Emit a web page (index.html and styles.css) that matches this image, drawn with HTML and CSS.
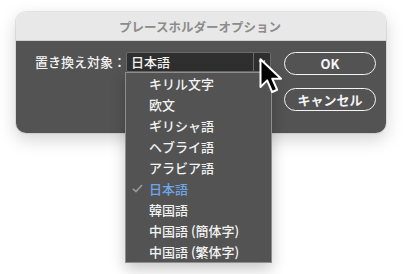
FILE: index.html
```html
<!DOCTYPE html>
<html lang="ja">
<head>
<meta charset="utf-8">
<link rel="stylesheet" href="styles.css">
</head>
<body>
<div class="stage">
  <div class="dialog">
    <div class="titlebar">プレースホルダーオプション</div>
    <div class="content">
      <div class="row">
        <span class="label">置き換え対象：</span>
        <div class="select">
          <span class="value">日本語</span>
          <span class="arrowbox">
            <svg width="8" height="6" viewBox="0 0 8 6"><path d="M1 1.5 L4 4.5 L7 1.5" fill="none" stroke="#cfcfcf" stroke-width="1.3"/></svg>
          </span>
        </div>
      </div>
      <div class="buttons">
        <button class="btn">OK</button>
        <button class="btn">キャンセル</button>
      </div>
    </div>
  </div>
  <ul class="menu">
    <li>キリル文字</li>
    <li>欧文</li>
    <li>ギリシャ語</li>
    <li>ヘブライ語</li>
    <li>アラビア語</li>
    <li class="checked"><svg class="check" width="11" height="9" viewBox="0 0 11 9"><path d="M1 4.8 L4 7.6 L10 1" fill="none" stroke="#9a9a9a" stroke-width="1.6"/></svg>日本語</li>
    <li>韓国語</li>
    <li>中国語 (簡体字)</li>
    <li>中国語 (繁体字)</li>
  </ul>
  <svg class="cursor" width="25" height="40" viewBox="0 0 22 36">
    <path d="M2 2 L2 27 L8 21 L12.5 31.5 L17 29.5 L12.6 19.6 L20.5 19.6 Z" fill="#000" stroke="#fff" stroke-width="1.8" stroke-linejoin="round"/>
  </svg>
</div>
</body>
</html>
```
FILE: styles.css
```css
* { box-sizing: border-box; }
html, body { margin: 0; padding: 0; background: #fff; }
body {
  font-family: "Noto Sans CJK JP", "Noto Sans", sans-serif;
  width: 407px; height: 274px; overflow: hidden;
}
.stage { position: relative; width: 407px; height: 274px; padding: 12px 0 0 16px; }
.dialog {
  width: 370px; height: 121px;
  border-radius: 10px;
  overflow: hidden;
  display: flex; flex-direction: column;
  box-shadow: 0 6px 18px rgba(0,0,0,0.18), 0 0 0 1px rgba(0,0,0,0.08);
}
.titlebar {
  height: 29px; flex: none;
  background: #e8e8e8;
  border-bottom: 1px solid #cfcfcf;
  color: #8c8c8c;
  font-size: 12.5px; font-weight: 700;
  display: flex; align-items: center; justify-content: center;
  padding-right: 2px;
}
.content {
  flex: 1;
  background: #535353;
  display: flex; justify-content: space-between;
  padding: 11px 10px 0 19px;
}
.row { display: flex; align-items: flex-start; }
.label {
  flex: none;
  color: #f2f2f2; font-size: 13px; font-weight: 500;
  height: 20px; line-height: 20px; width: 91px;
  white-space: nowrap;
}
.select {
  flex: none;
  width: 145px; height: 20px;
  background: #2f2f2f;
  border: 1px solid #6a6a6a;
  border-radius: 2px;
  display: flex;
}
.value {
  flex: 1; color: #f4f4f4; font-size: 13px; line-height: 18px; padding-left: 4px; font-weight: 500;
}
.arrowbox {
  width: 17px; border-left: 1px solid #6a6a6a;
  display: flex; align-items: center; justify-content: center;
}
.buttons { display: flex; flex-direction: column; gap: 13px; }
.btn {
  width: 92px; height: 23px;
  background: transparent;
  border: 1.6px solid #f4f4f4;
  border-radius: 12px;
  color: #f4f4f4;
  font-family: inherit; font-size: 13px; font-weight: 700;
  padding: 0; line-height: 19px;
}
.menu {
  position: absolute; left: 125px; top: 72px;
  width: 147px; margin: 0; padding: 0; list-style: none;
  background: #535353;
  border: 1px solid #8e8e8e;
  box-shadow: 0 6px 14px rgba(0,0,0,0.22);
}
.menu li {
  height: 21px; line-height: 21px;
  padding-left: 23px;
  color: #f2f2f2; font-size: 13px; font-weight: 500;
  position: relative;
}
.menu li.checked { color: #6ea6ea; }
.check { position: absolute; left: 6px; top: 6px; }
.cursor { position: absolute; left: 258px; top: 57px; }
```
